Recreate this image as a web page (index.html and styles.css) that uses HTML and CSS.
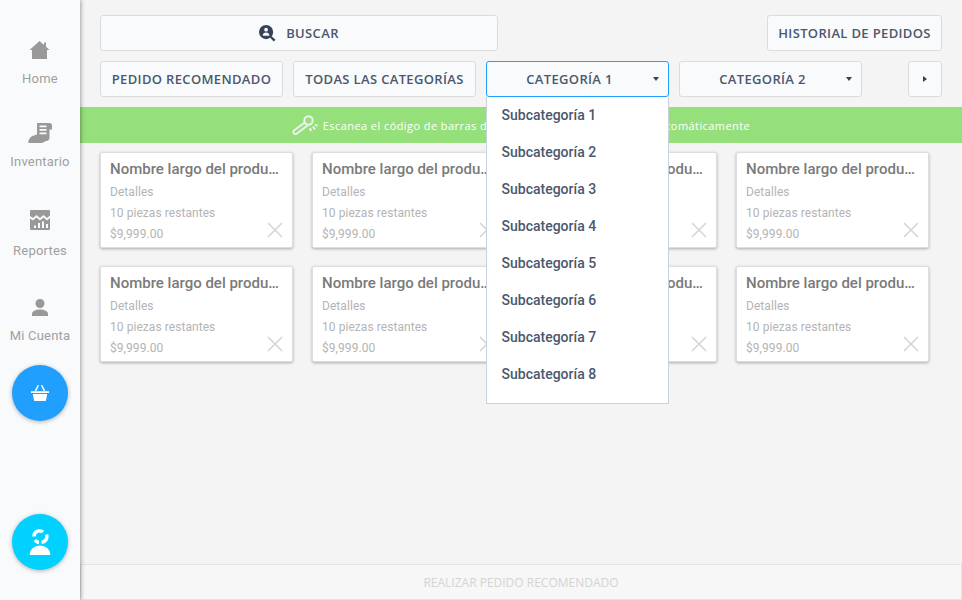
FILE: index.html
```html
<!DOCTYPE html>
<html lang="en">
<head>
  <meta charset="UTF-8">
  <title>Pedidos</title>
  <link rel="stylesheet" href="styles.css">
</head>
<body>
  <aside class="sidebar">
    <a class="nav-item nav-home">
      <svg class="nav-icon" viewBox="0 0 24 24"><path d="M11.500 3 L16 7 V4.500 H18 V8.800 L21.500 12 H19 V21 H4 V12 H1.500 Z"/></svg>
      <span>Home</span>
    </a>
    <a class="nav-item nav-inventory">
      <svg class="nav-icon" viewBox="0 0 24 24"><path d="M9 2 H21.500 A2.500 2.500 0 0 1 24 4.500 V8.500 H21.500 V17 A3.500 3.500 0 0 1 18 20 L14 22 H1.500 Q-0.500 22 0.500 20 Q2 15 6 14.500 L9 13.500 Z M11.500 4.500 V6.300 H18.500 V4.500 Z M11.500 8 V9.800 H18.500 V8 Z M11.500 11.500 V13.300 H18.500 V11.500 Z" fill-rule="evenodd"/></svg>
      <span>Inventario</span>
    </a>
    <a class="nav-item nav-reports">
      <svg class="nav-icon" viewBox="0 0 24 24"><path d="M3 2 H21 A1 1 0 0 1 22 3 V7.500 L19 10 L15.500 7 L12 10 L8.500 7 L5 10 L2 8 V3 A1 1 0 0 1 3 2 Z M2 10.500 L5 12.500 L8.500 9.500 L12 12.500 L15.500 9.500 L19 12.500 L22 10 V21 A1 1 0 0 1 21 22 H3 A1 1 0 0 1 2 21 Z M6 17.500 V20 H8 V17.500 Z M10 15 V20 H12 V15 Z M14 13.500 V20 H16 V13.500 Z M18 16 V20 H20 V16 Z" fill-rule="evenodd"/></svg>
      <span>Reportes</span>
    </a>
    <a class="nav-item nav-account">
      <svg class="nav-icon" viewBox="0 0 24 24"><circle cx="12" cy="7.500" r="4.500"/><path d="M4 20 V18 C4 15 8 13.500 12 13.500 C16 13.500 20 15 20 18 V20 Z"/></svg>
      <span>Mi Cuenta</span>
    </a>
    <div class="fab fab-cart">
      <svg viewBox="0 0 22 20" width="20" height="18"><path d="M1 8 H21 V10 H1 Z M3 11 H19 L17.500 19 H4.500 Z M5 7.500 L8.500 1 L10 1.800 L7 7.500 Z M17 7.500 L13.500 1 L12 1.800 L15 7.500 Z"/></svg>
    </div>
    <div class="fab fab-support">
      <svg viewBox="0 0 24 28" width="24" height="28"><path d="M1.500 27 A10.500 9.500 0 0 1 22.500 27 Z"/><path class="head-arc" d="M6 8.500 A5.500 5.500 0 0 1 15 4 M7 12 A5.500 5.500 0 0 0 11 14.500 M18.500 6.500 A6 6 0 0 1 13.500 14.500"/></svg>
    </div>
  </aside>

  <main class="main">
    <div class="toolbar">
      <div class="toolbar-row">
        <button class="btn btn-search">
          <svg viewBox="0 0 18 18" width="17" height="17"><path d="M7.500 0 A7.500 7.500 0 1 1 7.500 15 A7.500 7.500 0 1 1 7.500 0 Z M7.500 3 A2 2 0 1 0 7.500 7 A2 2 0 1 0 7.500 3 Z M4 11.500 H11 C11 9 9.500 8 7.500 8 C5.500 8 4 9 4 11.500 Z" fill-rule="evenodd"/><path d="M12.500 11 L17.500 15.500 L15.500 17.500 L11 12.500 Z"/></svg>
          <span>BUSCAR</span>
        </button>
        <button class="btn btn-history">HISTORIAL DE PEDIDOS</button>
      </div>
      <div class="toolbar-row">
        <div class="filters">
          <button class="btn btn-filter">PEDIDO RECOMENDADO</button>
          <button class="btn btn-filter">TODAS LAS CATEGORÍAS</button>
          <div class="dropdown">
            <button class="btn btn-filter btn-select is-open">CATEGORÍA 1<i class="caret"></i></button>
            <ul class="dropdown-menu">
              <li>Subcategoría 1</li>
              <li>Subcategoría 2</li>
              <li>Subcategoría 3</li>
              <li>Subcategoría 4</li>
              <li>Subcategoría 5</li>
              <li>Subcategoría 6</li>
              <li>Subcategoría 7</li>
              <li>Subcategoría 8</li>
            </ul>
          </div>
          <button class="btn btn-filter btn-select">CATEGORÍA 2<i class="caret"></i></button>
        </div>
        <button class="btn btn-next"><i class="caret-right"></i></button>
      </div>
    </div>

    <div class="banner">
      <svg viewBox="0 0 26 20" width="26" height="20"><path d="M13.500 7 L2 15.500 Q0.500 17 2 18.500 Q3.500 19.800 5 18.500 L15.500 10.500" stroke-width="1.800" fill="none"/><circle cx="16.500" cy="5.500" r="4.200" stroke-width="2" fill="none"/><path d="M18 13 L19 16 M21 11.500 L23 14.500 M23 9.500 L25.500 11" stroke-width="2" fill="none"/></svg>
      <span>Escanea el código de barras de un producto para agregarlo automáticamente</span>
    </div>

    <div class="products">
      <div class="card"><h3>Nombre largo del producto</h3><p>Detalles</p><p>10 piezas restantes</p><p>$9,999.00</p><svg class="card-close" viewBox="0 0 16 16"><path d="M1 1 L15 15 M15 1 L1 15"/></svg></div>
      <div class="card"><h3>Nombre largo del producto</h3><p>Detalles</p><p>10 piezas restantes</p><p>$9,999.00</p><svg class="card-close" viewBox="0 0 16 16"><path d="M1 1 L15 15 M15 1 L1 15"/></svg></div>
      <div class="card"><h3>Nombre largo del producto</h3><p>Detalles</p><p>10 piezas restantes</p><p>$9,999.00</p><svg class="card-close" viewBox="0 0 16 16"><path d="M1 1 L15 15 M15 1 L1 15"/></svg></div>
      <div class="card"><h3>Nombre largo del producto</h3><p>Detalles</p><p>10 piezas restantes</p><p>$9,999.00</p><svg class="card-close" viewBox="0 0 16 16"><path d="M1 1 L15 15 M15 1 L1 15"/></svg></div>
      <div class="card"><h3>Nombre largo del producto</h3><p>Detalles</p><p>10 piezas restantes</p><p>$9,999.00</p><svg class="card-close" viewBox="0 0 16 16"><path d="M1 1 L15 15 M15 1 L1 15"/></svg></div>
      <div class="card"><h3>Nombre largo del producto</h3><p>Detalles</p><p>10 piezas restantes</p><p>$9,999.00</p><svg class="card-close" viewBox="0 0 16 16"><path d="M1 1 L15 15 M15 1 L1 15"/></svg></div>
      <div class="card"><h3>Nombre largo del producto</h3><p>Detalles</p><p>10 piezas restantes</p><p>$9,999.00</p><svg class="card-close" viewBox="0 0 16 16"><path d="M1 1 L15 15 M15 1 L1 15"/></svg></div>
      <div class="card"><h3>Nombre largo del producto</h3><p>Detalles</p><p>10 piezas restantes</p><p>$9,999.00</p><svg class="card-close" viewBox="0 0 16 16"><path d="M1 1 L15 15 M15 1 L1 15"/></svg></div>
    </div>

    <div class="footer-bar">REALIZAR PEDIDO RECOMENDADO</div>
  </main>
</body>
</html>
```

FILE: styles.css
```css
* {
  box-sizing: border-box;
}

body {
  font-family: Roboto, sans-serif;
  background-color: #f4f4f4;
  margin: 0;
  height: 600px;
  display: flex;
  overflow: hidden;
  color: #34435a;
}

.sidebar {
  width: 80px;
  height: 600px;
  flex-shrink: 0;
  background-color: #f9fafc;
  box-shadow: 1px 0 4px rgba(0, 0, 0, 0.35);
  display: flex;
  flex-direction: column;
  align-items: center;
  position: relative;
  z-index: 2;
}

.nav-item {
  display: flex;
  flex-direction: column;
  align-items: center;
  font-size: 13px;
  line-height: 16px;
  color: #a0a0a0;
  letter-spacing: 0.2px;
}

.nav-icon {
  width: 24px;
  height: 24px;
  fill: #999;
  margin-bottom: 9px;
}

.nav-home { margin-top: 38px; }
.nav-inventory { margin-top: 34px; }
.nav-reports { margin-top: 38px; }
.nav-reports .nav-icon { margin-bottom: 11px; }
.nav-account { margin-top: 37px; }
.nav-account .nav-icon { margin-bottom: 8px; }

.fab {
  width: 56px;
  height: 56px;
  border-radius: 50%;
  display: flex;
  align-items: center;
  justify-content: center;
  box-shadow: 0 1px 4px rgba(0, 0, 0, 0.3);
  fill: #fff;
}

.fab-cart {
  background-color: #219ffe;
  margin-top: 21px;
}

.fab-support {
  background-color: #00d1ff;
  margin-top: 93px;
}

.head-arc {
  fill: none;
  stroke: #fff;
  stroke-width: 3.5;
}

.main {
  flex: 1;
  display: flex;
  flex-direction: column;
  min-width: 0;
}

.toolbar {
  padding: 15px 20px 10px;
  display: flex;
  flex-direction: column;
  gap: 10px;
}

.toolbar-row {
  display: flex;
  justify-content: space-between;
}

.filters {
  display: flex;
  gap: 10px;
}

.btn {
  height: 36px;
  background-color: #f9fafc;
  border: 1px solid #dcdcdc;
  border-radius: 3px;
  font-family: "Open Sans", sans-serif;
  font-size: 13px;
  font-weight: 600;
  letter-spacing: 0.35px;
  color: #4a586e;
  padding: 0;
  display: flex;
  align-items: center;
  justify-content: center;
  position: relative;
  white-space: nowrap;
}

.btn-search {
  width: 398px;
  gap: 10px;
  fill: #34435a;
}

.btn-history {
  width: 175px;
}

.btn-filter {
  width: 183px;
}

.btn-select {
  padding-right: 16px;
}

.btn-select.is-open {
  border-color: #219ffe;
}

.btn-next {
  width: 34px;
}

.caret {
  position: absolute;
  right: 9px;
  top: 15px;
  border-left: 3.500px solid transparent;
  border-right: 3.500px solid transparent;
  border-top: 4px solid #34435a;
}

.caret-right {
  border-top: 3.500px solid transparent;
  border-bottom: 3.500px solid transparent;
  border-left: 4px solid #34435a;
}

.dropdown {
  position: relative;
}

.dropdown-menu {
  position: absolute;
  top: 36px;
  left: 0;
  width: 183px;
  height: 307px;
  margin: 0;
  padding: 0;
  list-style: none;
  background-color: #fff;
  border: 1px solid #c8d2dc;
  border-top: none;
  z-index: 3;
}

.dropdown-menu li {
  height: 37px;
  line-height: 36px;
  padding-left: 14.500px;
  font-size: 14px;
  font-weight: 500;
  color: #4a586e;
}

.banner {
  height: 36px;
  background-color: #96e07c;
  color: #fff;
  font-family: "Open Sans", sans-serif;
  font-size: 11px;
  letter-spacing: 0.43px;
  display: flex;
  align-items: center;
  justify-content: center;
  gap: 5px;
  stroke: #f2f2f2;
}

.products {
  flex: 1;
  padding: 9px 0 0 20px;
  display: grid;
  grid-template-columns: repeat(4, 193px);
  grid-auto-rows: 96px;
  column-gap: 19px;
  row-gap: 18px;
  align-content: start;
}

.card {
  background-color: #fff;
  border: 1px solid #dedede;
  border-radius: 2px;
  box-shadow: 0 1px 3px rgba(0, 0, 0, 0.3);
  padding: 6px 9px;
  position: relative;
  min-width: 0;
}

.card h3 {
  margin: 0 0 3px;
  font-size: 15px;
  line-height: 20px;
  font-weight: 500;
  color: #7a7a7a;
  white-space: nowrap;
  overflow: hidden;
  text-overflow: ellipsis;
}

.card p {
  margin: 0;
  font-size: 12px;
  line-height: 21px;
  letter-spacing: 0.06px;
  color: #b4b4b4;
}

.card-close {
  position: absolute;
  right: 9px;
  bottom: 9px;
  width: 16px;
  height: 16px;
  stroke: #d4d4d4;
  stroke-width: 1.5;
  fill: none;
}

.footer-bar {
  height: 36px;
  background-color: #f7f7f7;
  border: 1px solid #e4e4e8;
  font-family: "Open Sans", sans-serif;
  font-size: 12px;
  color: #d4d4d4;
  display: flex;
  align-items: center;
  justify-content: center;
}
```
